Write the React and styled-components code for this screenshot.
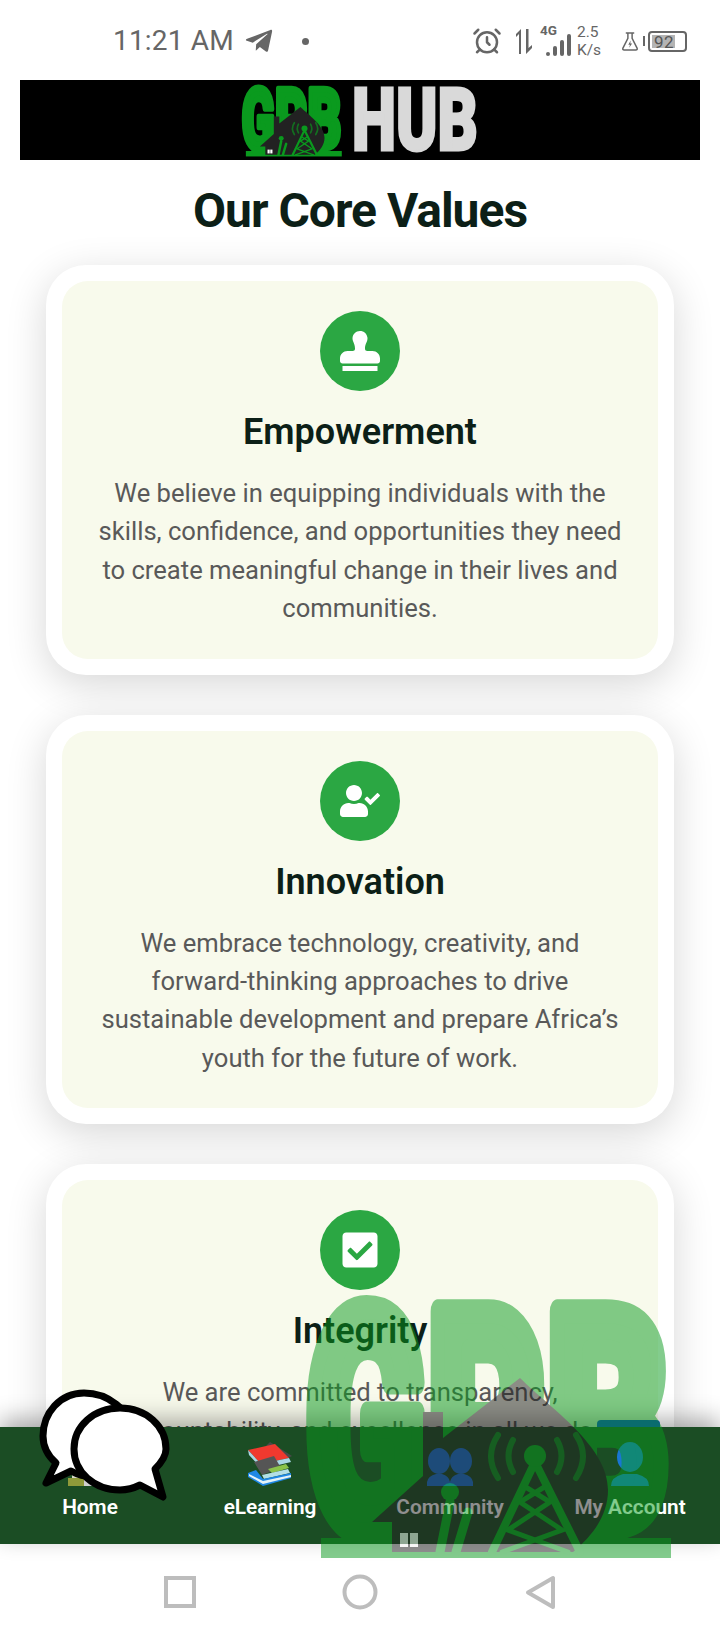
import React from 'react';
import styled, { createGlobalStyle } from 'styled-components';
import { FaStamp, FaUserCheck, FaCheckSquare, FaTelegramPlane } from 'react-icons/fa';
import { AlarmClock } from 'lucide-react';

const GlobalStyle = createGlobalStyle`
  html, body {
    margin: 0;
    padding: 0;
    background: #fff;
    font-family: Roboto, "Liberation Sans", sans-serif;
  }
  #root { width: 720px; }
  * { box-sizing: border-box; }
`;

const Page = styled.div`
  position: relative;
  width: 720px;
  height: 1640px;
  overflow: hidden;
  display: flex;
  flex-direction: column;
  background: #fff;
`;

const Scroller = styled.main`
  flex: 1;
  min-height: 0;
  overflow: hidden;
`;

/* status bar */
const StatusBar = styled.div`
  height: 80px;
  padding: 2px 33px 0 113px;
  display: flex;
  align-items: center;
  justify-content: space-between;
  color: #666;
`;

const StatusLeft = styled.div`
  display: flex;
  align-items: center;
`;

const Clock = styled.span`
  font-size: 28px;
  line-height: 32px;
  letter-spacing: 0.2px;
`;

const Dot = styled.span`
  width: 7px;
  height: 7px;
  border-radius: 50%;
  background: #666;
  margin-left: 28px;
`;

const StatusRight = styled.div`
  display: flex;
  align-items: center;
`;

const Network = styled.div`
  position: relative;
  width: 32px;
  height: 30px;
  margin-left: 6px;
  display: flex;
  align-items: flex-end;
  justify-content: flex-end;
  gap: 3px;
`;

const NetLabel = styled.span`
  position: absolute;
  top: -3px;
  left: 1px;
  font-size: 13.5px;
  line-height: 14px;
  font-weight: 700;
`;

const SignalBar = styled.i`
  display: block;
  width: 4px;
  height: ${({ h }) => h}px;
  border-radius: 2px;
  background: #666;
`;

const Speed = styled.div`
  width: 30px;
  margin-left: 6px;
  font-size: 15.5px;
  line-height: 18px;
  text-align: left;
`;

const Battery = styled.div`
  width: 39px;
  height: 21px;
  margin-left: 3px;
  border: 2px solid #666;
  border-radius: 4px;
  padding: 2px;
  display: flex;
`;

const BatteryFill = styled.div`
  width: 23px;
  height: 13px;
  padding-left: 2px;
  background: #b4b4b4;
  color: #555;
  font-size: 17px;
  line-height: 14px;
  letter-spacing: 0.5px;
  white-space: nowrap;
`;

const BatteryNub = styled.i`
  display: block;
  width: 2px;
  height: 10px;
  margin-left: 4px;
  background: #666;
`;

/* header */
const Banner = styled.header`
  height: 80px;
  margin: 0 20px;
  background: #000;
  display: flex;
  align-items: center;
  justify-content: center;
  gap: 6px;
`;

const Title = styled.h1`
  margin: 0;
  height: 105px;
  display: flex;
  align-items: center;
  justify-content: center;
  padding-bottom: 4px;
  color: #0c1f17;
  font-size: 48px;
  font-weight: 700;
  letter-spacing: -1px;
`;

/* cards */
const Cards = styled.div`
  padding: 0 46px;
  display: flex;
  flex-direction: column;
  gap: 40px;
`;

const Card = styled.article`
  padding: 16px;
  background: #fff;
  border-radius: 40px;
  box-shadow: 0 10px 40px rgba(0, 0, 0, 0.16);
`;

const CardInner = styled.div`
  padding: 30px 32px 31px;
  background: #f8faec;
  border-radius: 26px;
  display: flex;
  flex-direction: column;
  align-items: center;
  text-align: center;
`;

const IconCircle = styled.div`
  width: 80px;
  height: 80px;
  border-radius: 50%;
  background: #2ba743;
  color: #fff;
  display: flex;
  align-items: center;
  justify-content: center;
  font-size: 40px;
`;

const CardTitle = styled.h3`
  margin: 20px 0 21px;
  color: #0c1f17;
  font-size: 36px;
  line-height: 42px;
  font-weight: 600;
`;

const CardText = styled.p`
  margin: 0;
  color: #595959;
  font-size: 25.6px;
  line-height: 38.4px;
`;

/* bottom nav */
const BottomNav = styled.nav`
  position: relative;
  height: 117px;
  flex: none;
  padding-top: 15px;
  background: #1b4d24;
  box-shadow: 0 -8px 22px rgba(0, 0, 0, 0.32);
  display: grid;
  grid-template-columns: repeat(4, 180px);
`;

const NavItem = styled.div`
  display: flex;
  flex-direction: column;
  align-items: center;
  gap: 9px;
  color: #fff;
  font-size: 20.8px;
  line-height: 24px;
  font-weight: 600;
`;

const NavIcon = styled.div`
  height: 44px;
  display: flex;
  align-items: flex-end;
  justify-content: center;
`;

const NavTab = styled.i`
  position: absolute;
  top: -7px;
  left: 597px;
  width: 63px;
  height: 7px;
  border-radius: 4px 4px 0 0;
  background: #0a3fc0;
`;

/* android buttons */
const SystemNav = styled.div`
  height: 96px;
  flex: none;
  display: flex;
  justify-content: center;
  align-items: center;
  background: #fff;
`;

const SystemButton = styled.div`
  width: 180px;
  display: flex;
  justify-content: center;
`;

/* things lying over the page */
const Watermark = styled.div`
  position: absolute;
  left: 300px;
  top: 1290px;
  width: 375px;
  height: 270px;
  opacity: 0.5;
  pointer-events: none;
`;

const ChatBubbles = styled.svg`
  position: absolute;
  left: 30px;
  top: 1380px;
  width: 150px;
  height: 130px;
`;

const GREEN = '#0a9a1e';

const LogoLetter = ({ x, y, w, size, children }) => (
  <text
    x={x}
    y={y}
    textLength={w}
    lengthAdjust="spacingAndGlyphs"
    fontFamily="Roboto, sans-serif"
    fontWeight="900"
    fontSize={size}
    fill={GREEN}
    stroke={GREEN}
    strokeWidth="24"
    strokeLinejoin="round"
  >
    {children}
  </text>
);

const GpbLogo = ({ width, height }) => (
  <svg width={width} height={height} viewBox="0 0 375 270">
    <LogoLetter x={6} y={242} w={120} size={312}>G</LogoLetter>
    <LogoLetter x={128} y={238} w={116} size={305}>P</LogoLetter>
    <LogoLetter x={247} y={238} w={122} size={305}>B</LogoLetter>
    <rect x="21" y="248" width="350" height="20" fill={GREEN} />
    {/* roof, chimney and drop behind the tower */}
    <path
      d="M123 122h20v26L220 88c30 30 88 68 88 112c0 26-16 46-35 62H92v-30H72l51-46z"
      fill="#222"
    />
    <rect x="100" y="243" width="8" height="14" fill="#fff" />
    <rect x="110" y="243" width="8" height="14" fill="#fff" />
    <g fill="none" stroke={GREEN} strokeLinecap="round">
      {/* person */}
      <path d="M150 212L140 262M168 222L156 262" strokeWidth="9" />
      {/* radio waves */}
      <path d="M198 145Q184 166 198 188M276 145Q290 166 276 188" strokeWidth="6" opacity="0.65" />
      <path d="M213 150Q204 166 213 182M257 150Q266 166 257 182" strokeWidth="6" opacity="0.65" />
      {/* tower */}
      <path d="M235 172L192 262M235 172L280 262" strokeWidth="8" />
      <path
        d="M224 196L250 212L208 240L268 262M246 196L220 212L262 240L202 262"
        strokeWidth="5"
      />
    </g>
    <circle cx="235" cy="166" r="11" fill={GREEN} />
    <circle cx="150" cy="202" r="9" fill={GREEN} />
  </svg>
);

const HubWord = () => (
  <svg width="132" height="68" viewBox="0 0 132 68">
    <text
      x="3"
      y="64"
      textLength="126"
      lengthAdjust="spacingAndGlyphs"
      fontFamily="Roboto, sans-serif"
      fontWeight="900"
      fontSize="88"
      fill="#d9d9d9"
      stroke="#d9d9d9"
      strokeWidth="3"
    >
      HUB
    </text>
  </svg>
);

const ArrowsIcon = () => (
  <svg width="18" height="25" viewBox="0 0 18 25" style={{ marginLeft: 13 }}>
    <path d="M4 25V5L1 8V5L6 0V25zM11 0h2.5v19L17 16v3l-6 6z" fill="#666" />
  </svg>
);

const FlaskIcon = () => (
  <svg width="18" height="19" viewBox="0 0 16 18" style={{ marginLeft: 14 }}>
    <path
      d="M4 1h8M6 1v5L1.2 15.5Q0.8 17 2.4 17H13.6Q15.2 17 14.8 15.5L10 6V1"
      fill="none"
      stroke="#666"
      strokeWidth="1.4"
    />
    <path d="M8.6 8L6.4 12H8L7.2 15L10 11H8.3z" fill="#666" />
  </svg>
);

const HomeEmoji = () => (
  <svg width="44" height="44" viewBox="0 0 44 44">
    <path d="M4 24L22 6L40 24V44H4z" fill="#d8d8c8" />
    <rect x="0" y="36" width="16" height="8" fill="#8f9a3a" />
    <rect x="16" y="36" width="8" height="8" fill="#cfcfcf" />
  </svg>
);

const BooksEmoji = () => (
  <svg width="44" height="44" viewBox="0 0 44 44">
    <path d="M22 0L44 14L40 16L18 4z" fill="#4a4a4a" />
    <path d="M0 8L27 2L41 16L13 22z" fill="#f0392f" />
    <path d="M0 8L13 22L41 16L43 20L14 27L1 13z" fill="#a9d6e5" />
    <path d="M6 20L26 14L33 26L14 33z" fill="#555" />
    <path d="M20 27L38 22L41 26L24 31z" fill="#8bc34a" />
    <path d="M14 33L40 27L42 31L16 37z" fill="#b3dfe6" />
    <path d="M0 31L8 28L15 37L43 31V36L15 44L0 35z" fill="#1f88e5" />
    <path d="M1 32L15 39L43 33V35L15 42L1 34z" fill="#e3f2f8" />
  </svg>
);

const PeopleEmoji = () => (
  <svg width="46" height="38" viewBox="0 0 46 38">
    <g fill="#1976d2">
      <ellipse cx="12" cy="13" rx="11" ry="13" />
      <ellipse cx="34" cy="13" rx="11" ry="13" />
      <path d="M0 38V34Q1 28 9 26H15Q22 28 23 34V38zM23 38V34Q24 28 31 26H37Q45 28 46 34V38z" />
    </g>
  </svg>
);

const PersonEmoji = () => (
  <svg width="38" height="44" viewBox="0 0 38 44">
    <g fill="#1976d2">
      <ellipse cx="19" cy="15" rx="13" ry="15" />
      <path d="M0 44Q0 35 12 32H26Q38 35 38 44z" />
    </g>
  </svg>
);

const SquareButton = () => (
  <svg width="32" height="32" viewBox="0 0 32 32">
    <rect x="2" y="2" width="28" height="28" fill="none" stroke="#bdbdbd" strokeWidth="4" />
  </svg>
);

const CircleButton = () => (
  <svg width="36" height="36" viewBox="0 0 36 36">
    <circle cx="18" cy="18" r="15.5" fill="none" stroke="#bdbdbd" strokeWidth="4" />
  </svg>
);

const BackButton = () => (
  <svg width="30" height="35" viewBox="0 0 30 35">
    <path d="M28 3V32L3 17.5z" fill="none" stroke="#bdbdbd" strokeWidth="4" strokeLinejoin="round" />
  </svg>
);

const values = [
  {
    title: 'Empowerment',
    icon: <FaStamp />,
    text: 'We believe in equipping individuals with the skills, confidence, and opportunities they need to create meaningful change in their lives and communities.',
  },
  {
    title: 'Innovation',
    icon: <FaUserCheck />,
    text: 'We embrace technology, creativity, and forward-thinking approaches to drive sustainable development and prepare Africa’s youth for the future of work.',
  },
  {
    title: 'Integrity',
    icon: <FaCheckSquare />,
    text: 'We are committed to transparency, accountability, and excellence in all we do.',
  },
];

const navItems = [
  { label: 'Home', icon: <HomeEmoji /> },
  { label: 'eLearning', icon: <BooksEmoji /> },
  { label: 'Community', icon: <PeopleEmoji /> },
  { label: 'My Account', icon: <PersonEmoji /> },
];

function App() {
  return (
    <Page>
      <GlobalStyle />
      <Scroller>
        <StatusBar>
          <StatusLeft>
            <Clock>11:21 AM</Clock>
            <FaTelegramPlane size={30} style={{ marginLeft: 10 }} />
            <Dot />
          </StatusLeft>
          <StatusRight>
            <AlarmClock size={30} strokeWidth={2} />
            <ArrowsIcon />
            <Network>
              <NetLabel>4G</NetLabel>
              <SignalBar h={4} />
              <SignalBar h={10} />
              <SignalBar h={16} />
              <SignalBar h={22} />
            </Network>
            <Speed>
              2.5
              <br />
              K/s
            </Speed>
            <FlaskIcon />
            <BatteryNub />
            <Battery>
              <BatteryFill>92</BatteryFill>
            </Battery>
          </StatusRight>
        </StatusBar>
        <Banner>
          <GpbLogo width={103} height={74} />
          <HubWord />
        </Banner>
        <Title>Our Core Values</Title>
        <Cards>
          {values.map((v) => (
            <Card key={v.title}>
              <CardInner>
                <IconCircle>{v.icon}</IconCircle>
                <CardTitle>{v.title}</CardTitle>
                <CardText>{v.text}</CardText>
              </CardInner>
            </Card>
          ))}
        </Cards>
      </Scroller>
      <BottomNav>
        <NavTab />
        {navItems.map((item) => (
          <NavItem key={item.label}>
            <NavIcon>{item.icon}</NavIcon>
            {item.label}
          </NavItem>
        ))}
      </BottomNav>
      <SystemNav>
        <SystemButton>
          <SquareButton />
        </SystemButton>
        <SystemButton>
          <CircleButton />
        </SystemButton>
        <SystemButton>
          <BackButton />
        </SystemButton>
      </SystemNav>
      <Watermark>
        <GpbLogo width={375} height={270} />
      </Watermark>
      <ChatBubbles viewBox="0 0 150 130">
        <g fill="#fff" stroke="#000" strokeWidth="7" strokeLinejoin="round">
          <path d="M54 13C30 13 13 33 13 56C13 67 18 76 26 83L16 103L41 91C50 96 60 98 70 96C92 92 104 74 102 52C100 30 78 13 54 13z" />
          <path d="M90 28C64 28 44 46 44 69C44 92 64 110 90 110C98 110 104 108 110 105L133 117L125 89C132 82 136 75 136 69C136 46 116 28 90 28z" />
        </g>
      </ChatBubbles>
    </Page>
  );
}

export default App;
